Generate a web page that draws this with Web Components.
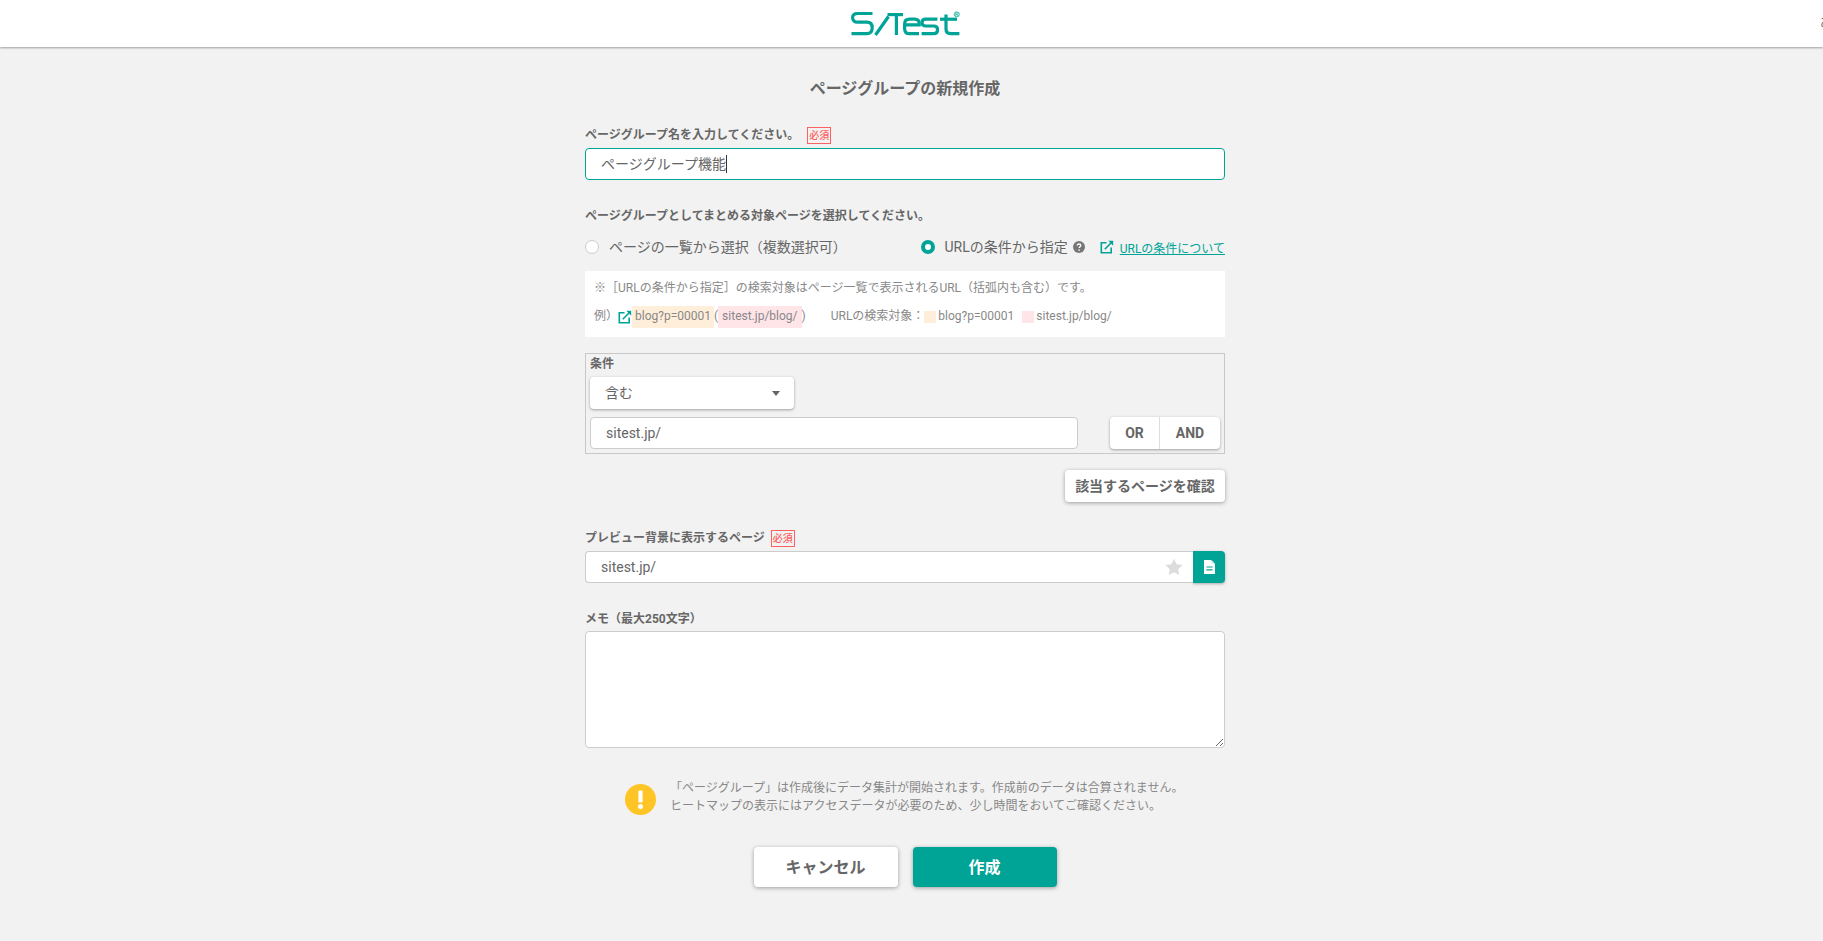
<!DOCTYPE html>
<html lang="ja">
<head>
<meta charset="utf-8">
<title>ページグループの新規作成</title>
<style>
html,body{margin:0;padding:0;height:100%;overflow:hidden}
body{box-sizing:border-box;padding-right:13px;background:#f2f2f2;color:#666;font-family:Roboto,"Noto Sans CJK JP",sans-serif;font-size:12px}
</style>
</head>
<body>
<site-header></site-header>
<page-group-form></page-group-form>
<script>
const icons={
 link:`<svg width="14" height="14" viewBox="0 0 14 14" fill="none" stroke="#00a497" stroke-width="1.6"><path d="M6.5 2.8H1.3v9.9h9.9V7.5"/><path d="M4.8 9.2 12.2 1.8"/><path d="M8.3.8H13.2V5.7Z" fill="#00a497" stroke="none"/></svg>`,
 help:`<svg width="12" height="12" viewBox="0 0 12 12"><circle cx="6" cy="6" r="6" fill="#777"/><path d="M4.2 4.6C4.2 3.5 5 3 6 3s1.8.6 1.8 1.5c0 1.3-1.6 1.3-1.6 2.5" fill="none" stroke="#fff" stroke-width="1.3"/><circle cx="6.1" cy="9" r=".85" fill="#fff"/></svg>`,
 star:`<svg width="18" height="18" viewBox="0 0 18 18"><path d="M9 .8l2.6 5.5 6 .8-4.4 4.1 1.1 5.9L9 14.2l-5.3 2.9 1.1-5.9L.4 7.1l6-.8z" fill="#dcdcdc"/></svg>`,
 doc:`<svg width="11" height="14" viewBox="0 0 11 14"><path d="M0 0H7L11 4V14H0Z" fill="#fff"/><path d="M7.6 0 11 3.4H7.6Z" fill="#bfe8e4"/><path d="M2.4 6.4H8.6V7.6H2.4ZM2.4 9.2H8.6V10.4H2.4Z" fill="#00a497"/></svg>`,
 warn:`<svg width="31" height="31" viewBox="0 0 31 31"><circle cx="15.5" cy="15.5" r="15.5" fill="#ffc526"/><rect x="13.4" y="6.5" width="4.2" height="12" rx="1.2" fill="#fff"/><circle cx="15.5" cy="22.5" r="2.5" fill="#fff"/></svg>`
};
function def(name,html,init){
  const t=document.createElement('template');t.innerHTML=html;
  customElements.define(name,class extends HTMLElement{
    constructor(){super();this.attachShadow({mode:'open'}).appendChild(t.content.cloneNode(true));}
    connectedCallback(){if(init)init(this,this.shadowRoot);}
  });
}
def('app-icon',`<style>:host{display:inline-flex;flex:none;line-height:0}</style><span id="i"></span>`,(h,s)=>{s.getElementById('i').innerHTML=icons[h.getAttribute('name')]||''});

def('site-logo',`<style>:host{display:block;width:110px;height:26px;line-height:0}</style>
<svg width="110" height="26" viewBox="0 0 110 26" fill="none" stroke="#00a497" stroke-width="3.2" aria-label="SiTest">
<path d="M21.5 2.5H6.5C3.5 2.5 1.6 4.2 1.6 6.8S3.5 11.2 6.5 11.2H16C19.6 11.2 21.2 13.2 21.2 16.8S19.4 22.6 16 22.6H.5"/>
<path d="M24.5 24 37.5 5.5"/>
<path d="M36.5 3.6H52"/><path d="M45.4 3.6V24"/>
<path d="M53.6 13.8H68.2V12.6C68.2 9.8 66.4 8.2 63.6 8.2H58.6C55.4 8.2 53.6 10 53.6 13V17.4C53.6 20.8 55.4 22.6 58.6 22.6H68"/>
<path d="M86.4 8.2H74.8C72.4 8.2 71 9.5 71 11.5S72.4 15 74.8 15H82.6C85.2 15 86.6 16.4 86.6 18.7S85.2 22.6 82.6 22.6H70.6"/>
<path d="M89 8.2H106"/><path d="M95 3.6V18C95 21 96.6 22.6 99.6 22.6H108.4"/>
<circle cx="105.8" cy="3.4" r="2.5" stroke-width=".8"/><path d="M104.8 5V2H106.4C107.3 2 107.3 3.6 106.4 3.6H104.8M106 3.6 107 5" stroke-width=".6"/>
</svg>`);

def('site-header',`<style>
:host{display:flex;justify-content:center;align-items:flex-start;position:relative;height:47px;margin-right:-13px;background:#fff;box-shadow:0 1px 2px rgba(0,0,0,.35);overflow:hidden;box-sizing:border-box;padding:11px 11px 0 0}
.u{position:absolute;right:-9px;top:15px;font-size:12px;line-height:16px;color:#666}
</style><site-logo></site-logo><span class="u">あ</span>`);

def('req-badge',`<style>:host{display:inline-block;box-sizing:border-box;width:24px;height:17px;border:1px solid #ff6060;color:#ff6060;font-size:10px;line-height:15px;text-align:center;white-space:nowrap}</style><slot></slot>`);

def('field-label',`<style>:host{display:flex;align-items:center;height:16px;font-size:12px;line-height:16px;font-weight:700;color:#666}
::slotted(req-badge){margin-left:var(--badge-gap,8px);font-weight:500}</style><slot></slot>`);

def('text-box',`<style>
:host{display:flex;align-items:center;box-sizing:border-box;height:32px;background:#fff;border:1px solid #ccc;border-radius:4px;padding:0 var(--pad,15px);font-size:14px;color:#666;line-height:20px}
:host([focused]){border-color:#00a497}
.c{display:none;width:1px;height:18px;background:#333}
:host([focused]) .c{display:block}
</style><slot></slot><span class="c"></span>`);

def('raised-button',`<style>
:host{display:inline-flex;align-items:center;justify-content:center;box-sizing:border-box;background:#fff;border-radius:4px;box-shadow:0 1px 4px rgba(0,0,0,.35);font-weight:700;color:#666;font-size:14px;white-space:nowrap;padding-bottom:2px}
:host([primary]){background:#00a497;color:#fff}
</style><slot></slot>`);

def('radio-option',`<style>
:host{display:inline-flex;align-items:center;gap:10px;font-size:14px;line-height:22px;color:#666;white-space:nowrap}
.r{box-sizing:border-box;width:14px;height:14px;border-radius:50%;background:#fff;border:1px solid #ccc;flex:none}
:host([checked]) .r{border:4.5px solid #00a497}
</style><span class="r"></span><span><slot></slot></span>`);

def('ext-link',`<style>:host{display:inline-flex;align-items:center;gap:6px;font-size:12px;white-space:nowrap}
span{color:#00a497;text-decoration:underline}</style><app-icon name="link"></app-icon><span><slot></slot></span>`);

def('mark-chip',`<style>:host{display:inline-block;height:22px;line-height:21px;box-sizing:border-box;padding:0 3px;white-space:nowrap}
:host([tone=o]){background:#ffeed9}:host([tone=p]){background:#ffe4e8;padding:0 4px}</style><slot></slot>`);

def('swatch-text',`<style>:host{display:inline-flex;align-items:center;gap:2px;white-space:nowrap;height:21px}
i{width:12px;height:12px;display:block}:host([tone=o]) i{background:#ffeed9}:host([tone=p]) i{background:#ffe4e8}</style><i></i><slot></slot>`);

def('info-box',`<style>
:host{display:block;background:#fff;padding:8px 8px 9px 9px;color:#888;font-size:12px}
.a{line-height:18px;height:18px;white-space:nowrap}
.b{display:flex;align-items:flex-start;height:22px;line-height:21px;margin-top:9px;white-space:nowrap}
.b app-icon{margin-top:4px}
.g{margin-left:25px}
.s2{margin-left:8px}
</style>
<div class="a">※［URLの条件から指定］の検索対象はページ一覧で表示されるURL（括弧内も含む）です。</div>
<div class="b"><span>例）</span><app-icon name="link"></app-icon><mark-chip tone="o">blog?p=00001</mark-chip><span>(</span><mark-chip tone="p">sitest.jp/blog/</mark-chip><span>)</span><span class="g">URLの検索対象：</span><swatch-text tone="o">blog?p=00001</swatch-text><swatch-text tone="p" class="s2">sitest.jp/blog/</swatch-text></div>`);

def('select-box',`<style>
:host{display:flex;align-items:center;justify-content:space-between;box-sizing:border-box;width:204px;height:32px;padding:0 14px 2px 15px;background:#fff;border-radius:4px;box-shadow:0 1px 3px rgba(0,0,0,.35);font-size:14px;color:#666}
i{width:0;height:0;border:4px solid transparent;border-top:5px solid #666;border-bottom:0;margin-top:2px}
</style><slot></slot><i></i>`);

def('logic-toggle',`<style>
:host{display:flex;width:110px;height:32px;background:#fff;border-radius:4px;box-shadow:0 1px 3px rgba(0,0,0,.35);font-size:14px;font-weight:700;color:#666;flex:none}
span{display:flex;align-items:center;justify-content:center}
.o{width:49px;border-right:1px solid #ddd}.a{flex:1}
</style><span class="o">OR</span><span class="a">AND</span>`);

def('condition-box',`<style>
:host{display:block;box-sizing:border-box;height:101px;border:1px solid #c8c8c8;padding:2px 4px 4px}
field-label{margin-bottom:5px}
select-box{margin-bottom:8px}
.r{display:flex;justify-content:space-between;align-items:center}
text-box{width:488px}
</style><field-label>条件</field-label><select-box>含む</select-box>
<div class="r"><text-box>sitest.jp/</text-box><logic-toggle></logic-toggle></div>`);

def('page-picker',`<style>
:host{display:flex;height:32px}
.i{flex:1;position:relative}
text-box{width:100%;border-radius:4px 0 0 4px;border-right:0}
.star{position:absolute;right:10px;top:7px}
.b{display:flex;align-items:center;justify-content:center;width:32px;background:#00a497;border-radius:0 4px 4px 0;box-shadow:0 1px 3px rgba(0,0,0,.3)}
</style><div class="i"><text-box>sitest.jp/</text-box><app-icon class="star" name="star"></app-icon></div><div class="b"><app-icon name="doc"></app-icon></div>`);

def('notice-line',`<style>
:host{display:flex;align-items:center;gap:14px;padding-left:40px;font-size:12px;color:#888;line-height:18px}
app-icon{margin-top:4px}
</style><app-icon name="warn"></app-icon><div><slot></slot></div>`);

def('page-group-form',`<style>
:host{display:block;width:640px;margin:30px auto 0}
h1{margin:0 0 26px;text-align:center;font-size:16px;line-height:24px;font-weight:700;color:#666}
field-label{margin-bottom:5px}
.f{margin-top:28px}
.radios{display:flex;align-items:center;height:22px;margin:12px 0 13px}
.radios .l{width:335.5px}
.radios ext-link{margin-left:auto}
.h{display:inline-flex;margin-left:5px;vertical-align:-1px}
condition-box{margin-top:16px}
.confirm{display:flex;justify-content:flex-end;margin-top:16px}
.confirm raised-button{width:160px;height:32px}
.m{margin-top:28px;margin-bottom:5px}
.memo{margin-bottom:4px}
textarea{display:block;box-sizing:border-box;width:640px;height:117px;background:#fff;border:1px solid #ccc;border-radius:4px;margin:0;padding:8px 16px;outline:0;font:inherit;resize:vertical}
notice-line{margin-top:31px}
.act{display:flex;justify-content:center;gap:15px;margin-top:32px}
.act raised-button{width:144px;height:40px;font-size:16px}
</style>
<h1>ページグループの新規作成</h1>
<field-label>ページグループ名を入力してください。<req-badge>必須</req-badge></field-label>
<text-box focused>ページグループ機能</text-box>
<field-label class="f">ページグループとしてまとめる対象ページを選択してください。</field-label>
<div class="radios">
 <div class="l"><radio-option>ページの一覧から選択（複数選択可）</radio-option></div>
 <radio-option checked>URLの条件から指定<span class="h"><app-icon name="help"></app-icon></span></radio-option>
 <ext-link>URLの条件について</ext-link>
</div>
<info-box></info-box>
<condition-box></condition-box>
<div class="confirm"><raised-button>該当するページを確認</raised-button></div>
<field-label class="m" style="--badge-gap:6px">プレビュー背景に表示するページ<req-badge>必須</req-badge></field-label>
<page-picker></page-picker>
<field-label class="m memo">メモ（最大250文字）</field-label>
<textarea></textarea>
<notice-line>「ページグループ」は作成後にデータ集計が開始されます。作成前のデータは合算されません。<br>ヒートマップの表示にはアクセスデータが必要のため、少し時間をおいてご確認ください。</notice-line>
<div class="act"><raised-button>キャンセル</raised-button><raised-button primary>作成</raised-button></div>`);
</script>
</body>
</html>
